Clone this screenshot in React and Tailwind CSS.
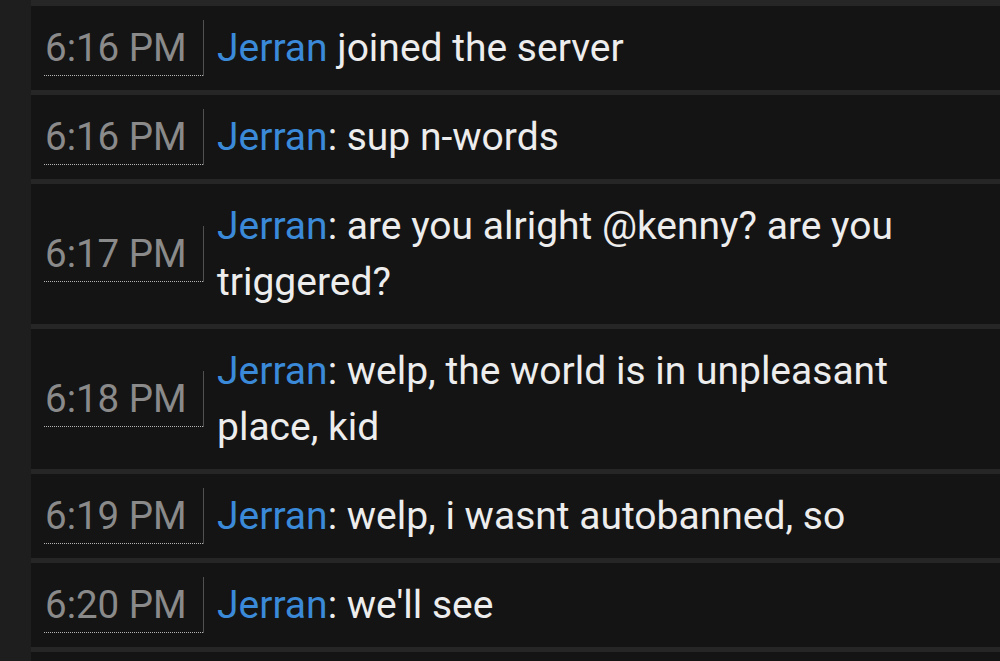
const messages = [
  { time: '6:16 PM', text: ' joined the server', join: true },
  { time: '6:16 PM', text: 'sup n-words' },
  { time: '6:17 PM', text: 'are you alright @kenny? are you triggered?' },
  { time: '6:18 PM', text: 'welp, the world is in unpleasant place, kid' },
  { time: '6:19 PM', text: 'welp, i wasnt autobanned, so' },
  { time: '6:20 PM', text: "we'll see" },
];

function Row({ time, text, join }) {
  return (
    <div className="flex items-center bg-[#141414] pl-[13px] pr-[60px] py-[14px]">
      <div className="flex items-stretch h-[56px] shrink-0">
        <div className="w-[159px] pl-[1px] border-b border-dotted border-[#b4b4b4] text-[38.5px] leading-[55px] text-[#8a8a8a]">
          {time}
        </div>
        <div className="w-[1px] bg-[#505050]" />
      </div>
      <div className="pl-[13px] text-[39px] leading-[56px] text-[#ededed]">
        <span className="text-[#3b8ad9]">Jerran</span>
        {join ? text : ': ' + text}
      </div>
    </div>
  );
}

export default function App() {
  return (
    <div className="flex h-screen overflow-hidden bg-[#1e1e1e] font-['Roboto',sans-serif]">
      <div className="w-[31px] shrink-0" />
      <div className="flex-1 flex flex-col gap-[5px] bg-[#262626] pt-[6px]">
        {messages.map((m, i) => (
          <Row key={i} {...m} />
        ))}
        <div className="h-[84px] shrink-0 bg-[#141414]" />
      </div>
    </div>
  );
}
